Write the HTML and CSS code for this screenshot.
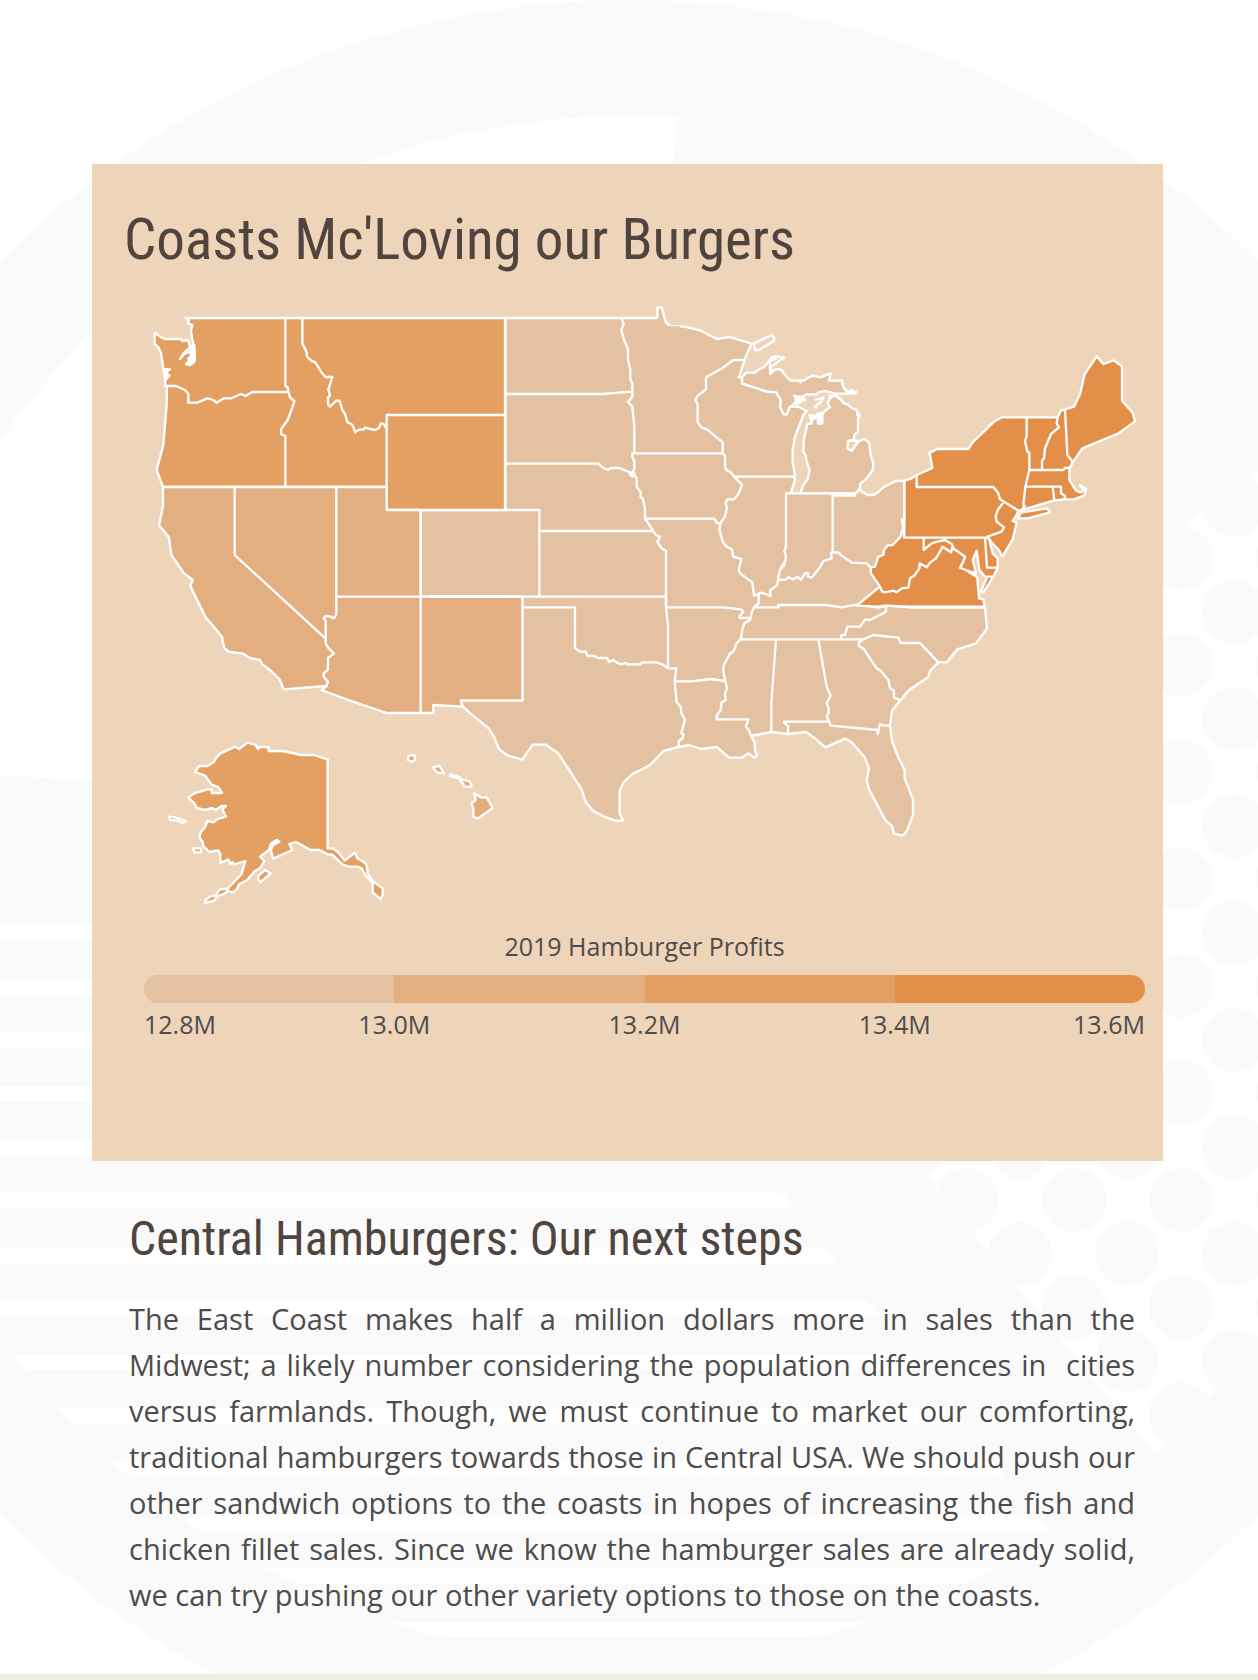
FILE: index.html
```html
<!DOCTYPE html>
<html lang="en">
<head>
<meta charset="utf-8">
<title>Coasts Mc'Loving our Burgers</title>
<meta name="viewport" content="width=device-width, initial-scale=1">
<link rel="stylesheet" href="styles.css">
</head>
<body>
<main class="page">
  <svg class="watermark" viewBox="0 0 1258 1674" aria-hidden="true">
    <defs>
      <clipPath id="plate"><circle cx="629" cy="888" r="772"/></clipPath>
      <clipPath id="fries"><path d="M0 900H552L1060 1546V1680H0Z"/></clipPath>
      <pattern id="seeds" x="1181" y="558" width="107" height="107" patternUnits="userSpaceOnUse">
        <g class="mark"><circle cx="0" cy="0" r="32"/><circle cx="107" cy="0" r="32"/><circle cx="0" cy="107" r="32"/><circle cx="107" cy="107" r="32"/><circle cx="53" cy="54" r="32"/></g>
      </pattern>
    </defs>
    <circle class="mark" cx="629" cy="888" r="888"/>
    <g clip-path="url(#plate)">
      <path class="gap" d="M0 100H678L640 700Q300 800 0 775Z"/>
      <g class="gap" clip-path="url(#fries)">
        <path d="M0 925H1258V941H0ZM0 979H1258V995H0ZM0 1032H1258V1048H0ZM0 1086H1258V1102H0ZM0 1140H1258V1156H0ZM0 1193H1258V1209H0ZM0 1247H1258V1263H0ZM0 1300H1258V1316H0ZM0 1354H1258V1370H0ZM0 1408H1258V1424H0ZM0 1461H1258V1477H0ZM0 1515H1258V1531H0ZM0 1568H1258V1584H0ZM0 1622H1258V1638H0Z"/>
      </g>
      <path class="gap" d="M1184 526L1258 471H1401V1500H1193L927 1177L800 1000V800Z"/>
      <path fill="url(#seeds)" d="M1184 526L1258 471H1401V1500H1193L927 1177L800 1000V800Z"/>
    </g>
  </svg>

  <section class="card">
    <h1>Coasts Mc'Loving our Burgers</h1>
    <svg class="map" viewBox="276 900 3213 1830" role="img" aria-label="Map of 2019 hamburger profits by state">
      <g transform="translate(1140 870)">
        <path class="low" d="M900 109H870L857 95 845 52H832V84H376V660H122V920H427V1231H242L247 1248 268 1268 326 1315 342 1340 357 1377 382 1396 427 1409 458 1364H497L535 1390 605 1498 617 1535 637 1561 673 1580 705 1592H730L719 1572V1502L730 1478 757 1452 808 1427 850 1383 896 1371"/>
      </g>
      <g transform="translate(1980 870)">
        <path class="low bare" d="M-40 109H70L120 121 170 147 208 141 275 161 253 210 246 281 348 400 398 478 404 548 393 607 585 612 622 615H640L655 606 670 592 707 573H733V1000H-40Z"/>
      </g>
      <g transform="translate(1980 1680)">
        <path class="low bare" d="M975 143L700 300 56 561 0 300-20-100H700V137Z"/>
        <path class="low" d="M975 143L981 205 948 250 892 268 861 307H835L810 333 804 352 747 390 720 422 696 452 690 497 696 543 714 590 734 630V655L759 718V765L741 812 728 827 702 821 696 797 677 782 655 740 627 688 620 660 627 625 614 592 575 547 556 536 496 562 465 535 438 516 383 522 334 516 273 528 284 547 285 573 291 587 284 593 265 580 246 593H207L170 561 124 567 87 555 56 561"/>
      </g>

      <g transform="translate(420 870)">
        <path class="high" d="M137 84L147 90 144 100 157 105 153 122 157 150 162 170 165 205 160 218 150 225 138 222 148 212 145 205 155 198V185L135 190 120 207 133 187 150 172 145 150 127 153 123 147H75L60 140 45 128 43 160 55 172 63 190 67 215 70 242 90 238 76 247 88 257 76 270 75 287 81 288 80 345 70 465 50 540 69 591H740V660H1095V84Z"/>
        <path class="mid" d="M69 591V648L57 706 87 742 94 795 132 850 158 870 151 888 196 980 246 1040 252 1073 265 1085 310 1091 330 1104 360 1110 367 1123 390 1140 418 1167 431 1198 560 1188 545 1200 625 1230 740 1269H880V1245L968 1250 962 1231H1147V920H842V660H740V591Z"/>
        <path class="line" d="M436 84V288L443 292 445 305 450 322 463 333 458 350 443 390 423 418V432L436 438V591M487 84V160L500 187 501 200 513 211 526 217 543 245 556 261H577L565 298 570 317 564 322V342L570 350 590 331 599 333 607 360 615 372 622 396 637 404 646 427 657 419 672 418 674 413 705 420 717 414 722 401H730L740 417M81 288H108L135 300 145 311V338H172L202 325 220 330 229 338 252 325H273L303 312 317 318 336 306H445M740 591V375H1095M284 591V795L556 1045M589 591V972L582 985 568 979 557 978 551 984 557 992V1060L566 1075 582 1091 564 1104V1138L551 1150V1160L564 1175 560 1187M589 920H1578M842 660V1269"/>
        <path class="water" d="M150 172L163 165V215L145 222 150 205 155 185ZM70 237L88 238 78 247 86 257 76 270Z"/>
      </g>

      <g transform="translate(1140 870)">
        <path class="line" d="M376 312H665L755 305M723 84L731 100 724 120 732 150 744 178V208L751 240V268L757 280V320L744 336 757 350 763 410V490H757V500L763 515V538L757 546 764 552 757 560 750 554 757 546 770 565V590L782 605V622L788 625 795 655V686L820 723 827 735 840 740 832 756 845 775 858 782V950M376 521H655L668 533 685 540 692 534H718L757 550M763 490H1028M795 686H1003M376 660H478V920M478 723H820M427 952H585V1073L598 1085H617L623 1098H643L655 1104H681L687 1116 699 1110 718 1122H730L737 1118 742 1123H780L787 1117H830L850 1125 864 1135"/>
      </g>

      <g transform="translate(1980 870)">
        <path class="low" d="M246 262L258 248H285L300 236 310 233 318 224 335 203 345 198 372 203 360 210 340 225 330 232 332 252 345 238H362L375 255 392 272H430L445 263 460 257 480 262 512 250 507 272H545L547 285 555 300 570 306 588 305 586 311H525L515 308 495 303 475 307 470 313H440L420 325 405 318 408 335 395 348 380 374 370 372 360 350 362 330 348 307 320 305 246 281Z"/>
        <path class="low" d="M253 210H220L186 235 138 262V298L112 318 106 330 113 343V397L124 412 142 419 188 457V490L195 497V530L200 541 213 547 222 560H404V548L398 520V478L405 440 430 375 440 363 415 350H390L380 374 370 372 360 350 362 330 348 307 320 305 246 281V262H235L240 255 246 235Z"/>
        <path class="low" d="M421 609L430 585 443 567 449 540 440 515 437 495 430 487 432 445 436 430 442 402 455 400 453 385 448 375 465 378 485 368 475 378 474 400H487V375L495 362 510 352 503 340 510 325 525 315 535 325 548 332V338L565 345 575 354 590 360 592 375 600 376 594 385V425L583 435 582 450 565 453 562 475 575 483 595 455 612 447 627 457 633 500 640 520 638 540 620 565 602 580 598 598 585 610Z"/>
        <path class="line" d="M60 109H70L120 121 170 147 208 141 275 161 253 210M282 160L335 135 342 142V153L297 180H285ZM340 200L350 205 330 215V250L340 238M400 315L415 330H435L425 320H410V340L425 335M465 330L490 322 485 333 465 350 472 355M410 270L425 278M545 268L550 290 562 305 580 300M505 318H530L545 328M595 365V385M575 453L595 452 580 475M222 560L246 584 235 613 222 628H202L196 640 201 650 195 680 181 700 178 718 188 755 200 770 215 778 220 800 244 807 236 840M163 686L170 698 181 702M404 560V575L393 607M360 838L377 810V795L373 785 378 768V610H518L585 613M518 612V788M490 813L515 805 513 788 535 787 545 797 575 818 620 820 632 832M598 598L622 615H640L655 606 670 592 707 573H733"/>
        <path class="water" d="M450 378L468 382 455 392ZM473 372L486 368V400H474ZM518 610H585V617H518Z"/>
      </g>

      <g transform="translate(1980 1680)">
        <path class="line" d="M18 100V142L24 200V325H49L44 363 50 427 62 440 64 460 75 478 64 520 70 523 68 535 56 543V561M18 142H192L245 149 250 156 239 168V174H270M44 364H95L150 357 194 363M236 30L240 40 277 67 282 107 296 103V130L283 140 276 155 270 180 253 190 246 212 243 237 230 250 220 275 210 280 190 318V335L196 363 201 385 195 400 197 420 184 428 182 450 170 468V478H265L258 500 268 513 273 528M376 0L373 15 361 28 355 50 352 75 330 92 332 108 305 98 283 107M355 58L376 60 384 52 400 58 412 50 422 60 437 38 445 40 443 50 455 53 480 22 490 3M283 142H355V135H498L543 142 590 134 655 143 680 137 760 143H975M243 238H610M678 137V155L630 180 615 178 600 200H562L555 225 543 226V238M610 238L640 225 715 233 722 249H780L835 307M610 238L596 248 597 258 612 268 630 295 650 325 660 330 685 360 690 385 702 392V413L720 420M348 238L334 430V516M475 238L500 380 512 407 500 430 506 445V460L500 468 512 497 653 510V522L660 492 672 497H690M383 522L385 500 372 487V485H503"/>
      </g>

      <g transform="translate(2550 1020)">
        <path class="top" d="M163 422L185 415 200 405 247 384 240 345 236 340 262 327H355L368 307 432 245 455 232H623L632 212 645 208 672 200 690 163 704 103 740 49 760 72 791 61 816 79V182L848 218 855 244 804 281 697 325 668 367 658 385V420L678 452 693 458 700 450 690 436 708 448 702 467 672 478H640L610 482 515 510 505 512 497 530 488 543 500 548 488 598 457 650 448 632 418 600 428 640 443 655V683L430 710 400 757H392L410 715 388 690 380 632 368 660 378 700 347 690 382 712 387 775 400 778 404 800H180L105 797 85 800 20 797 55 768 90 740 63 700 62 682 75 680 85 650 100 645 102 630 112 617 128 615 152 590 157 570 163 540Z"/>
        <path class="top" d="M513 518L590 505 600 517 533 535H503Z"/>
        <path class="line" d="M163 422V593H410L418 588 455 575 462 562 440 545 437 530 443 510 460 487M200 405V441H430L445 460 450 478 505 512M530 232V290L525 302 532 335 538 338V390L526 440 520 495 525 498 512 513M623 232L620 250 627 262 603 282 585 325 582 355 576 362V390M538 390H640L645 384 658 383M645 208L652 345 668 365M526 440H633V460L645 468V478M608 440L613 482M221 593V630L245 610 262 605 285 600 305 612 312 627 345 650 340 665 330 683 347 690M90 740L97 755 105 757 130 752 140 757 155 745 175 743 180 715 192 708 208 685 209 670 230 682 240 668 258 655 278 620 303 637 308 620M405 593L411 683H443M410 710H430M163 593L155 535M410 588L422 602"/>
      </g>

      <g transform="translate(450 2190)">
        <path class="high" d="M533 88V355L550 356 565 367 584 392 615 368 622 385 640 395 650 405 653 430 670 455 698 475V495L692 507 668 487V460L648 438 635 415 622 410H595L577 403 547 374 533 373 508 360H482L460 348 438 336 418 342 427 360 370 386 362 360 370 345 388 335 380 330 362 342 357 360 330 380 343 393 330 415 312 425 292 450 268 462 260 478 248 487 235 483 220 493 203 498 192 512 165 519V512L180 500 197 496 210 477H232L275 432 286 393 253 403 247 396 241 403 235 388 211 399V373L205 361 178 366 160 348 158 335 148 322 153 305 165 292 172 273 190 277 205 266 228 260 217 238 228 228 215 228 197 240 187 234 165 240 140 234 133 220 115 203 133 190 172 178H185V189H216L205 171 185 164 165 137 135 126 147 108H172L192 96 197 85 210 71 255 50 267 57 293 38 317 45 325 57 328 51H356V63H397L455 75H492Z"/>
        <path class="high" d="M57 260L75 262 108 273 97 279 85 272 60 270ZM128 355H153V367H134ZM325 438L345 420 362 430 332 456 325 450Z"/>
        <path class="mid" d="M780 76H795V90L785 96 774 90V80ZM850 113L868 107 882 130 860 127ZM900 132L930 142V146L900 138ZM932 147L960 155 965 170H943L938 158 932 156ZM972 190L992 202H1010L1028 234 983 266 970 260V237L964 220 977 210Z"/>
      </g>
    </svg>

    <figure class="legend">
      <figcaption>2019 Hamburger Profits</figcaption>
      <div class="scale"><span class="step-1"></span><span class="step-2"></span><span class="step-3"></span><span class="step-4"></span></div>
      <ol class="ticks"><li>12.8M</li><li>13.0M</li><li>13.2M</li><li>13.4M</li><li>13.6M</li></ol>
    </figure>
  </section>

  <section class="story">
    <h2>Central Hamburgers: Our next steps</h2>
    <p>The East Coast makes half a million dollars more in sales than the Midwest; a likely number considering the population differences in&nbsp; cities versus farmlands. Though, we must continue to market our comforting, traditional hamburgers towards those in Central USA. We should push our other sandwich options to the coasts in hopes of increasing the fish and chicken fillet sales. Since we know the hamburger sales are already solid, we can try pushing our other variety options to those on the coasts.</p>
  </section>
</main>
</body>
</html>
```
FILE: styles.css
```css
* {
  box-sizing: border-box;
}

body {
  margin: 0;
  background: #fff;
  color: #4d4c4a;
  font-family: "Open Sans", "Noto Sans", sans-serif;
}

.page {
  position: relative;
  overflow: hidden;
  padding: 164px 95px 56px 92px;
  border-bottom: 6px solid #eeede6;
}

.watermark {
  position: absolute;
  top: 0;
  left: 0;
  z-index: 0;
  width: 100%;
}

.mark {
  fill: #fafafa;
}

.gap {
  fill: #fff;
}

.card,
.story {
  position: relative;
  z-index: 1;
}

.card {
  padding: 38px 0 119px;
  background: #eed4b9;
}

h1,
h2 {
  margin: 0;
  color: #50443f;
  font-family: "Roboto Condensed", Lato, sans-serif;
  font-weight: 400;
}

h1 {
  padding-left: 32px;
  font-size: 57px;
  line-height: 76px;
}

.map {
  display: block;
  width: 100%;
  margin-top: 22px;
}

.map path {
  stroke: #fff;
  stroke-width: 7;
  stroke-linejoin: round;
}

.map .bare {
  stroke: none;
}

.map .line {
  fill: none;
}

.map .water {
  fill: #fff;
}

.low {
  fill: #e4c1a0;
}

.mid {
  fill: #e3af81;
}

.high {
  fill: #e4a062;
}

.top {
  fill: #e38f49;
}

.legend {
  margin: 18px 18px 0 52px;
  font-size: 25px;
  line-height: 36px;
}

.legend figcaption {
  text-align: center;
}

.scale {
  display: grid;
  grid-template-columns: repeat(4, 1fr);
  height: 28px;
  margin-top: 11px;
  overflow: hidden;
  border-radius: 14px;
}

.step-1 {
  background: #e4c1a0;
}

.step-2 {
  background: #e3af81;
}

.step-3 {
  background: #e4a062;
}

.step-4 {
  background: #e38f49;
}

.ticks {
  display: grid;
  grid-template-columns: 1fr 2fr 2fr 2fr 1fr;
  margin: 3px 0 0;
  padding: 0;
  list-style: none;
  text-align: center;
}

.ticks li:first-child {
  text-align: left;
}

.ticks li:last-child {
  text-align: right;
}

.story {
  padding: 46px 28px 0 37px;
}

h2 {
  font-size: 48px;
  line-height: 64px;
}

.story p {
  margin: 25px 0 0;
  font-size: 29px;
  line-height: 46px;
  text-align: justify;
}
```
